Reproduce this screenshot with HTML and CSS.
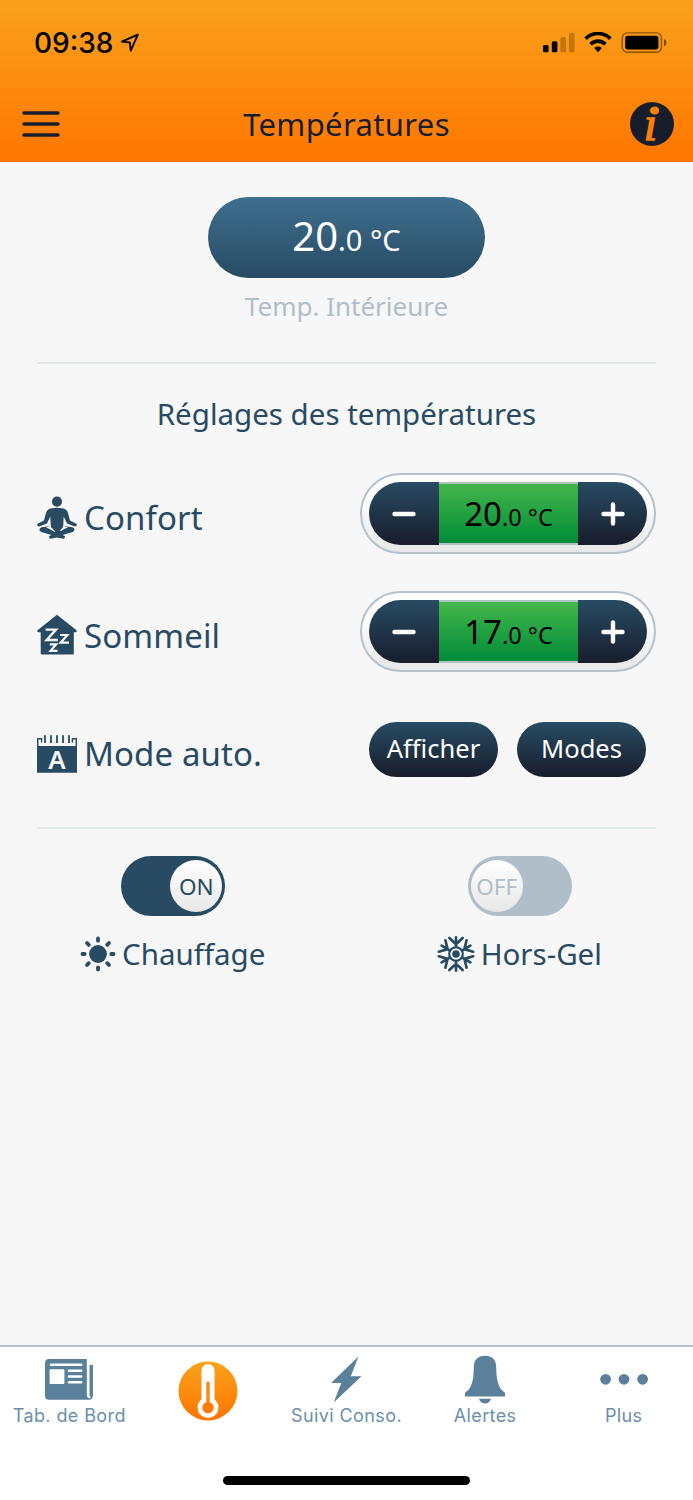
FILE: index.html
```html
<!DOCTYPE html>
<html lang="fr">
<head>
    <meta charset="UTF-8">
    <meta name="viewport" content="width=device-width, initial-scale=1.0">
    <title>Températures</title>
    <link rel="stylesheet" href="styles.css">
</head>
<body>
    <header>
        <div class="status-bar">
            <span class="time">09:38</span>
            <svg class="location" width="20" height="20" viewBox="0 0 20 20">
                <path d="M1.8 8.6 L17.8 1.6 L10.8 17.6 L9.9 9.5 Z" fill="none" stroke="#000" stroke-width="1.9" stroke-linejoin="round"/>
            </svg>
            <svg class="signal" width="124" height="22" viewBox="0 0 124 22">
                <rect x="0" y="13" width="5.6" height="7.3" rx="1.5"/>
                <rect x="8.8" y="9.3" width="5.6" height="11" rx="1.5"/>
                <rect x="17.4" y="5" width="5.6" height="15.3" rx="1.5" opacity=".22"/>
                <rect x="26" y="0.8" width="5.6" height="19.5" rx="1.5" opacity=".22"/>
                <g fill="none" stroke="#000" stroke-width="3.6">
                    <path d="M42.6 6.7 A17.5 17.5 0 0 1 67.4 6.7"/>
                    <path d="M47.6 12.2 A10.4 10.4 0 0 1 62.4 12.2"/>
                </g>
                <path d="M55 20.3 L51.2 16 A5.6 5.6 0 0 1 58.8 16 Z"/>
                <rect x="79.2" y="0.9" width="39.3" height="19.4" rx="5.2" fill="none" stroke="#000" stroke-width="1.4" opacity=".45"/>
                <rect x="82.2" y="3.8" width="33.2" height="13.6" rx="2.6"/>
                <path d="M121 7 Q123.4 8.2 123.4 10.6 Q123.4 13 121 14.2 Z" opacity=".5"/>
            </svg>
        </div>
        <div class="title-bar">
            <svg class="menu" width="38" height="28" viewBox="0 0 38 28">
                <path d="M2 3 H36 M2 14 H36 M2 25 H36" stroke="#181d2b" stroke-width="3.4" stroke-linecap="round"/>
            </svg>
            <h1>Températures</h1>
            <svg class="info" width="44" height="44" viewBox="0 0 44 44">
                <circle cx="22" cy="22" r="22" fill="#181d2b"/>
                <text x="20.5" y="38" text-anchor="middle" class="info-letter">i</text>
                <circle cx="25" cy="8.5" r="4" fill="#ff8008"/>
            </svg>
        </div>
    </header>

    <main>
        <section class="current">
            <div class="reading">20<small>.0 °C</small></div>
            <p>Temp. Intérieure</p>
        </section>

        <section class="settings">
            <h2>Réglages des températures</h2>

            <div class="row">
                <svg class="icon" width="40" height="44" viewBox="0 0 40 44">
                    <circle cx="20" cy="5.6" r="5.1"/>
                    <path d="M15 12.3 Q20 11 25 12.3 Q30 13 31 17 L33 24.5 L39 27.4 Q40.4 28.6 39.4 30 Q38.5 30.8 36.5 30 L30 27.4 L26.7 20.5 L26.2 30 L35.2 31.3 Q38 32 37.4 34.4 Q36.5 36.4 33 36.8 L25.5 39 L27.8 40 Q28.3 42.6 26.6 42.8 L20 41.6 L13.4 42.8 Q11.7 42.6 12.2 40 L14.5 39 L7 36.8 Q3.5 36.4 2.6 34.4 Q2 32 4.8 31.3 L13.8 30 L13.3 20.5 L10 27.4 L3.5 30 Q1.5 30.8 .6 30 Q-.4 28.6 1 27.4 L7 24.5 L9 17 Q10 13 15 12.3 Z"/>
                    <path d="M9 31.4 L13.7 29.7 L14.3 31.4 L18.4 35.4 L17.2 35.8 Q13 32.8 9 31.4 Z M31 31.4 L26.3 29.7 L25.7 31.4 L22.8 34.6 L24.2 35 Q27 32.8 31 31.4 Z" fill="#f7f7f7"/>
                </svg>
                <span class="name">Confort</span>
                <div class="stepper">
                    <button class="minus" aria-label="Diminuer"><svg width="24" height="24" viewBox="0 0 24 24"><path d="M2.5 12 H21.5"/></svg></button>
                    <div class="value">20<small>.0 °C</small></div>
                    <button class="plus" aria-label="Augmenter"><svg width="24" height="24" viewBox="0 0 24 24"><path d="M2.5 12 H21.5 M12 2.5 V21.5"/></svg></button>
                </div>
            </div>

            <div class="row">
                <svg class="icon" width="40" height="44" viewBox="0 0 40 44">
                    <path d="M20 .7 L39.5 16.3 Q40.3 18 38.8 18.2 H36.8 V39.6 Q36.8 40.6 35.8 40.6 H4.7 Q3.7 40.6 3.7 39.6 V18.2 H1.2 Q-.3 18 .5 16.3 Z"/>
                    <g fill="none" stroke="#f7f7f7" stroke-width="2.4">
                        <path d="M8.6 15.6 H19 L9.6 26 H20.8"/>
                        <path d="M23 21 H30.4 L23.6 28.7 H32" stroke-width="2.2"/>
                        <path d="M12.8 30.3 H19.2 L13.6 36.9 H20.6" stroke-width="2.2"/>
                    </g>
                </svg>
                <span class="name">Sommeil</span>
                <div class="stepper">
                    <button class="minus" aria-label="Diminuer"><svg width="24" height="24" viewBox="0 0 24 24"><path d="M2.5 12 H21.5"/></svg></button>
                    <div class="value">17<small>.0 °C</small></div>
                    <button class="plus" aria-label="Augmenter"><svg width="24" height="24" viewBox="0 0 24 24"><path d="M2.5 12 H21.5 M12 2.5 V21.5"/></svg></button>
                </div>
            </div>

            <div class="row">
                <svg class="icon" width="40" height="44" viewBox="0 0 40 44">
                    <path d="M0 14 H40 V40.8 H0 Z"/>
                    <path d="M.7 15 V6.8 H4.6 V10.4 M39.3 15 V6.8 H35.4 V10.4" fill="none" stroke="#284b63" stroke-width="1.4"/>
                    <path d="M8 3.2 V11 M14 3.2 V11 M20 3.2 V11 M26 3.2 V11 M32 3.2 V11" stroke="#284b63" stroke-width="1.8"/>
                    <text x="20" y="37.4" text-anchor="middle" class="auto-letter">A</text>
                </svg>
                <span class="name">Mode auto.</span>
                <div class="buttons">
                    <button class="pill">Afficher</button>
                    <button class="pill">Modes</button>
                </div>
            </div>
        </section>

        <section class="switches">
            <div class="switch on">
                <div class="track"><span class="knob">ON</span></div>
                <div class="caption">
                    <svg width="36" height="36" viewBox="0 0 36 36">
                        <circle cx="18" cy="18" r="8.9"/>
                        <g stroke="#284b63" stroke-width="3.8" stroke-linecap="round">
                            <path d="M18 2.5 V4.7 M18 31.3 V33.5 M2.5 18 H4.7 M31.3 18 H33.5 M7 7 L8.8 8.8 M27.2 27.2 L29 29 M7 29 L8.8 27.2 M27.2 8.8 L29 7"/>
                        </g>
                    </svg>
                    <span>Chauffage</span>
                </div>
            </div>
            <div class="switch off">
                <div class="track"><span class="knob">OFF</span></div>
                <div class="caption">
                    <svg width="38" height="36" viewBox="-19 -18 38 36">
                        <defs>
                            <path id="branch" d="M0 -7 V-16.6 M0 -9.8 L-6.6 -16 M0 -9.8 L6.6 -16"/>
                        </defs>
                        <g fill="none" stroke="#284b63" stroke-width="2.7" stroke-linecap="round">
                            <circle r="6.8" stroke-width="2.1"/>
                            <use href="#branch"/>
                            <use href="#branch" transform="rotate(60)"/>
                            <use href="#branch" transform="rotate(120)"/>
                            <use href="#branch" transform="rotate(180)"/>
                            <use href="#branch" transform="rotate(240)"/>
                            <use href="#branch" transform="rotate(300)"/>
                        </g>
                        <circle r="3.8"/>
                    </svg>
                    <span>Hors-Gel</span>
                </div>
            </div>
        </section>
    </main>

    <footer>
        <nav>
            <a class="tab">
                <svg width="50" height="50" viewBox="0 0 50 50">
                    <path d="M5 5 H44 V41 Q44 43.6 46.3 43.6 Q47 43.6 46.7 42.6 Q45.4 42.4 45.4 41 V11 H49 V41 Q49 45.7 45 45.7 H5 Q1 45.7 1 41.7 V9 Q1 5 5 5 Z"/>
                    <path d="M44 5 V41 Q44.2 43.4 46 43.1" fill="none" stroke="#fff" stroke-width="2.4"/>
                    <path d="M7 10.8 H37.2 M25 16.7 H37.2 M25 22.5 H37.2 M25 28.3 H37.2" stroke="#fff" stroke-width="2.6" stroke-linecap="round"/>
                    <rect x="5.6" y="15.2" width="14.8" height="14.8" rx="1" fill="#fff"/>
                </svg>
                <span>Tab. de Bord</span>
            </a>
            <a class="tab active">
                <svg width="60" height="60" viewBox="0 0 60 60">
                    <defs>
                        <linearGradient id="orange" x1="0" y1="0" x2="0" y2="1">
                            <stop offset="0" stop-color="#faa21b"/>
                            <stop offset="1" stop-color="#ff7600"/>
                        </linearGradient>
                    </defs>
                    <circle cx="30" cy="30" r="29.5" fill="url(#orange)"/>
                    <path d="M30 9.5 V46.5" stroke="#fff" stroke-width="13" stroke-linecap="round"/>
                    <circle cx="30" cy="46.6" r="10.5" fill="#fff"/>
                    <path d="M30 22.3 V46" stroke="#fd8410" stroke-width="3.4" stroke-linecap="round"/>
                    <circle cx="30" cy="46.6" r="5.7" fill="#fe7c07"/>
                </svg>
            </a>
            <a class="tab">
                <svg width="50" height="50" viewBox="0 0 50 50">
                    <path d="M37.5 2.5 L29.8 22.2 H40.5 L12.7 48.6 L20.3 28.9 H10 Z"/>
                </svg>
                <span>Suivi Conso.</span>
            </a>
            <a class="tab">
                <svg width="50" height="50" viewBox="0 0 50 50">
                    <path d="M25 1.7 Q36 2 36.2 13 Q36.2 24 38.4 30 Q40.4 36 44.4 38.2 Q45 38.6 45 39.3 V42.4 H5 V39.3 Q5 38.6 5.6 38.2 Q9.6 36 11.6 30 Q13.8 24 13.8 13 Q14 2 25 1.7 Z"/>
                    <path d="M19 44.8 H31 Q29.5 49.6 25 49.6 Q20.5 49.6 19 44.8 Z"/>
                </svg>
                <span>Alertes</span>
            </a>
            <a class="tab">
                <svg width="50" height="50" viewBox="0 0 50 50">
                    <circle cx="6.6" cy="25.3" r="5.4"/>
                    <circle cx="25" cy="25.3" r="5.4"/>
                    <circle cx="43.6" cy="25.3" r="5.4"/>
                </svg>
                <span>Plus</span>
            </a>
        </nav>
        <div class="home-indicator"></div>
    </footer>
</body>
</html>
```

FILE: styles.css
```css
* {
    box-sizing: border-box;
}
body {
    margin: 0;
    height: 1500px;
    display: flex;
    flex-direction: column;
    background: #f7f7f7;
    color: #284b63;
    font-family: "Noto Sans", sans-serif;
}
h1, h2, p {
    margin: 0;
    font-weight: 400;
}
svg {
    display: block;
    flex: none;
}
button {
    border: none;
    padding: 0;
    font-family: inherit;
}

/* header */
header {
    height: 162px;
    background: linear-gradient(#faa21b, #ff7600);
}
.status-bar {
    height: 86px;
    padding: 0 26px 0 34px;
    display: flex;
    align-items: center;
}
.time {
    font-family: Inter, sans-serif;
    font-size: 28px;
    font-weight: 500;
    color: #000;
    width: 86px;
}
.signal {
    margin-left: auto;
}
.title-bar {
    height: 76px;
    padding: 0 19px 0 22px;
    display: grid;
    grid-template-columns: 44px 1fr 44px;
    align-items: center;
}
h1 {
    font-size: 31px;
    line-height: 40px;
    letter-spacing: 0.35px;
    text-align: center;
    color: #181d2b;
    padding-right: 3px;
}
.info {
    overflow: visible;
}
.info-letter {
    font: italic 48px/1 "Liberation Serif", serif;
    fill: #ff8008;
    stroke: #ff8008;
    stroke-width: 1.4;
}

/* current temperature */
.current {
    height: 202px;
    margin: 0 37px;
    padding-top: 35px;
    border-bottom: 2px solid #e2e7e8;
    text-align: center;
}
.reading {
    width: 277px;
    height: 81px;
    margin: 0 auto;
    border-radius: 41px;
    background: linear-gradient(#3f6f8f, #284b63);
    color: #fff;
    font-size: 40px;
    line-height: 78px;
}
.reading small {
    font-size: 29px;
}
.current p {
    margin-top: 9px;
    font-size: 26px;
    line-height: 38px;
    color: #b0bec9;
}

/* settings */
.settings {
    height: 465px;
    margin: 0 37px;
    padding-top: 30px;
    border-bottom: 2px solid #e2e7e8;
}
h2 {
    font-size: 29.5px;
    line-height: 40px;
    text-align: center;
    margin-bottom: 39px;
}
.row {
    height: 81px;
    margin-bottom: 37px;
    display: flex;
    align-items: center;
}
.icon,
.caption svg {
    fill: #284b63;
}
.icon {
    margin-top: 8px;
}
.name {
    margin: 8px 0 0 7px;
    font-size: 33px;
    line-height: 44px;
    letter-spacing: 0.1px;
}
.auto-letter {
    font: 600 26px "Noto Sans", sans-serif;
    fill: #f7f7f7;
}
.stepper {
    width: 296px;
    height: 81px;
    margin-left: auto;
    padding: 7px;
    border: 2px solid #b4c2cc;
    border-radius: 41px;
    background: linear-gradient(#fff 20%, #e8e8e8);
    display: flex;
}
.stepper button {
    width: 70px;
    height: 63px;
    background: linear-gradient(#284b63, #181d2b);
    display: flex;
    align-items: center;
    justify-content: center;
}
.stepper button svg {
    stroke: #fff;
    stroke-width: 4.4;
    stroke-linecap: round;
    fill: none;
}
.stepper .minus {
    border-radius: 32px 0 0 32px;
}
.stepper .plus {
    width: 69px;
    border-radius: 0 32px 32px 0;
}
.value {
    flex: 1;
    height: 63px;
    border: 2px solid #b0c4c4;
    border-width: 2px 0;
    background: linear-gradient(#45b649, #008c3a);
    color: #000;
    font-size: 33px;
    line-height: 60px;
    text-align: center;
}
.value small {
    font-size: 23.5px;
}
.buttons {
    margin: 0 10px 0 auto;
    display: flex;
    gap: 19px;
}
.pill {
    width: 129px;
    height: 55px;
    padding-bottom: 2px;
    border-radius: 28px;
    background: linear-gradient(#284b63, #181d2b);
    color: #fff;
    font-size: 25.5px;
    line-height: 53px;
}

/* switches */
.switches {
    display: grid;
    grid-template-columns: 1fr 1fr;
    padding-top: 27px;
}
.switch {
    display: flex;
    flex-direction: column;
    align-items: center;
}
.track {
    width: 104px;
    height: 60px;
    padding: 4px 3px;
    border-radius: 30px;
    background: #284b63;
    display: flex;
    justify-content: flex-end;
}
.off .track {
    background: #b0bec9;
    justify-content: flex-start;
}
.knob {
    width: 52px;
    height: 52px;
    border-radius: 50%;
    background: linear-gradient(#fff, #e8e8e8);
    font-size: 22.5px;
    line-height: 54px;
    text-align: center;
}
.off .knob {
    color: #b0bec9;
}
.caption {
    margin-top: 18px;
    padding-right: 1px;
    display: flex;
    align-items: center;
    gap: 6px;
    font-size: 29.5px;
    line-height: 40px;
}

/* bottom tabs */
footer {
    height: 155px;
    margin-top: auto;
    border-top: 2px solid #b4c2cc;
    background: #fff;
}
nav {
    height: 129px;
    display: grid;
    grid-template-columns: repeat(5, 1fr);
}
.tab {
    padding-top: 7px;
    display: flex;
    flex-direction: column;
    align-items: center;
    color: #6b8fab;
    font-family: Inter, sans-serif;
    font-size: 18px;
    line-height: 24px;
    letter-spacing: 0.4px;
    white-space: nowrap;
}
.tab svg {
    fill: #5b809c;
}
.tab.active {
    padding-top: 14px;
}
.home-indicator {
    width: 247px;
    height: 9px;
    margin: 0 auto;
    border-radius: 5px;
    background: #000;
}
```
